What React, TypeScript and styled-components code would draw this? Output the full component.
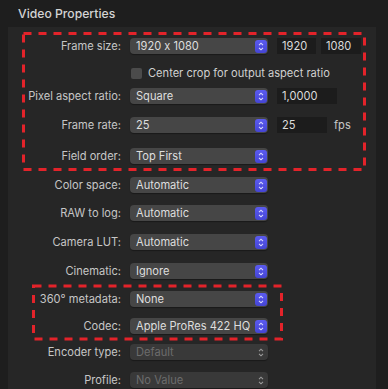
import React from "react";
import styled, { createGlobalStyle } from "styled-components";

const GlobalStyle = createGlobalStyle`
  html, body {
    margin: 0;
    padding: 0;
    background: #1e1e1e;
  }
  body {
    font-family: Inter, "Liberation Sans", sans-serif;
    font-feature-settings: "calt" 0;
    -webkit-font-smoothing: antialiased;
  }
`;

const Page = styled.div`
  position: relative;
  width: 388px;
  height: 389px;
  overflow: hidden;
  background: #1e1e1e;
`;

const Title = styled.div`
  height: 27px;
  line-height: 27px;
  padding-left: 18px;
  color: #d4d4d4;
  font-size: 12.2px;
  font-weight: 500;
`;

const Panel = styled.div`
  margin-left: 8px;
  width: 368px;
  height: 362px;
  background: #262626;
  display: flex;
  flex-direction: column;
`;

const Row = styled.div<{ $top: number }>`
  display: flex;
  align-items: center;
  height: 16px;
  margin-top: ${(p) => p.$top}px;
  font-size: 11.1px;
`;

const Label = styled.div`
  box-sizing: border-box;
  width: 122px;
  padding-right: 9px;
  text-align: right;
  color: #c6c6c6;
  white-space: nowrap;
`;

const Popup = styled.div<{ $disabled?: boolean }>`
  box-sizing: border-box;
  width: 138px;
  height: 16px;
  display: flex;
  align-items: center;
  justify-content: space-between;
  padding: 0 1px 0 6px;
  border-radius: 4px;
  background: ${(p) => (p.$disabled ? "#393939" : "#464646")};
  box-shadow: 0 1px 1px rgba(0, 0, 0, 0.35);
  color: ${(p) => (p.$disabled ? "#6c6c6c" : "#dedede")};
  white-space: nowrap;
`;

const Stepper = styled.div<{ $disabled?: boolean }>`
  width: 12px;
  height: 13px;
  margin-top: 1px;
  border-radius: 3px;
  display: flex;
  align-items: center;
  justify-content: center;
  background: ${(p) =>
    p.$disabled ? "transparent" : "linear-gradient(#5b5bf0, #4545d4)"};
`;

const Field = styled.div<{ $width: number; $gap: number }>`
  box-sizing: border-box;
  width: ${(p) => p.$width}px;
  height: 16px;
  margin-left: ${(p) => p.$gap}px;
  padding-left: 5px;
  line-height: 16px;
  background: #1c1c1c;
  color: #dcdcdc;
`;

const Unit = styled.span`
  margin-left: 7px;
  color: #c6c6c6;
`;

const Check = styled.div`
  width: 11px;
  height: 11px;
  margin-left: 1px;
  border-radius: 2px;
  background: #4b4b4b;
`;

const CheckText = styled.span`
  margin-left: 6px;
  color: #d0d0d0;
`;

const Overlay = styled.svg`
  position: absolute;
  left: 0;
  top: 0;
  pointer-events: none;
`;

function Chevrons({ color }: { color: string }) {
  return (
    <svg width="12" height="13" viewBox="0 0 12 13">
      <polyline points="4,5.2 6,3.2 8,5.2" fill="none" stroke={color} strokeWidth="1.1" />
      <polyline points="4,7.8 6,9.8 8,7.8" fill="none" stroke={color} strokeWidth="1.1" />
    </svg>
  );
}

function Select({ value, disabled }: { value: string; disabled?: boolean }) {
  return (
    <Popup $disabled={disabled}>
      <span>{value}</span>
      <Stepper $disabled={disabled}>
        <Chevrons color={disabled ? "#9a9a9a" : "#d8d8ff"} />
      </Stepper>
    </Popup>
  );
}

const simpleRows: { top: number; label: string; value: string; disabled?: boolean }[] = [
  { top: 13, label: "Color space:", value: "Automatic" },
  { top: 12, label: "RAW to log:", value: "Automatic" },
  { top: 13, label: "Camera LUT:", value: "Automatic" },
  { top: 13, label: "Cinematic:", value: "Ignore" },
  { top: 12, label: "360° metadata:", value: "None" },
  { top: 11, label: "Codec:", value: "Apple ProRes 422 HQ" },
  { top: 10, label: "Encoder type:", value: "Default", disabled: true },
  { top: 12, label: "Profile:", value: "No Value", disabled: true },
];

export default function App() {
  return (
    <Page>
      <GlobalStyle />
      <Title>Video Properties</Title>
      <Panel>
        <Row $top={11}>
          <Label>Frame size:</Label>
          <Select value="1920 x 1080" />
          <Field $width={39} $gap={9}>1920</Field>
          <Field $width={40} $gap={5}>1080</Field>
        </Row>
        <Row $top={11}>
          <Label />
          <Check />
          <CheckText>Center crop for output aspect ratio</CheckText>
        </Row>
        <Row $top={7}>
          <Label>Pixel aspect ratio:</Label>
          <Select value="Square" />
          <Field $width={60} $gap={9}>1,0000</Field>
        </Row>
        <Row $top={13}>
          <Label>Frame rate:</Label>
          <Select value="25" />
          <Field $width={50} $gap={9}>25</Field>
          <Unit>fps</Unit>
        </Row>
        <Row $top={15}>
          <Label>Field order:</Label>
          <Select value="Top First" />
        </Row>
        {simpleRows.map((r) => (
          <Row key={r.label} $top={r.top}>
            <Label>{r.label}</Label>
            <Select value={r.value} disabled={r.disabled} />
          </Row>
        ))}
      </Panel>
      <Overlay width="388" height="389">
        <rect x="23.5" y="33.5" width="341" height="136" fill="none" stroke="#e3232a" strokeWidth="3" strokeDasharray="8 7" />
        <rect x="33.5" y="286" width="248" height="53" fill="none" stroke="#e3232a" strokeWidth="3" strokeDasharray="8 7" />
      </Overlay>
    </Page>
  );
}
